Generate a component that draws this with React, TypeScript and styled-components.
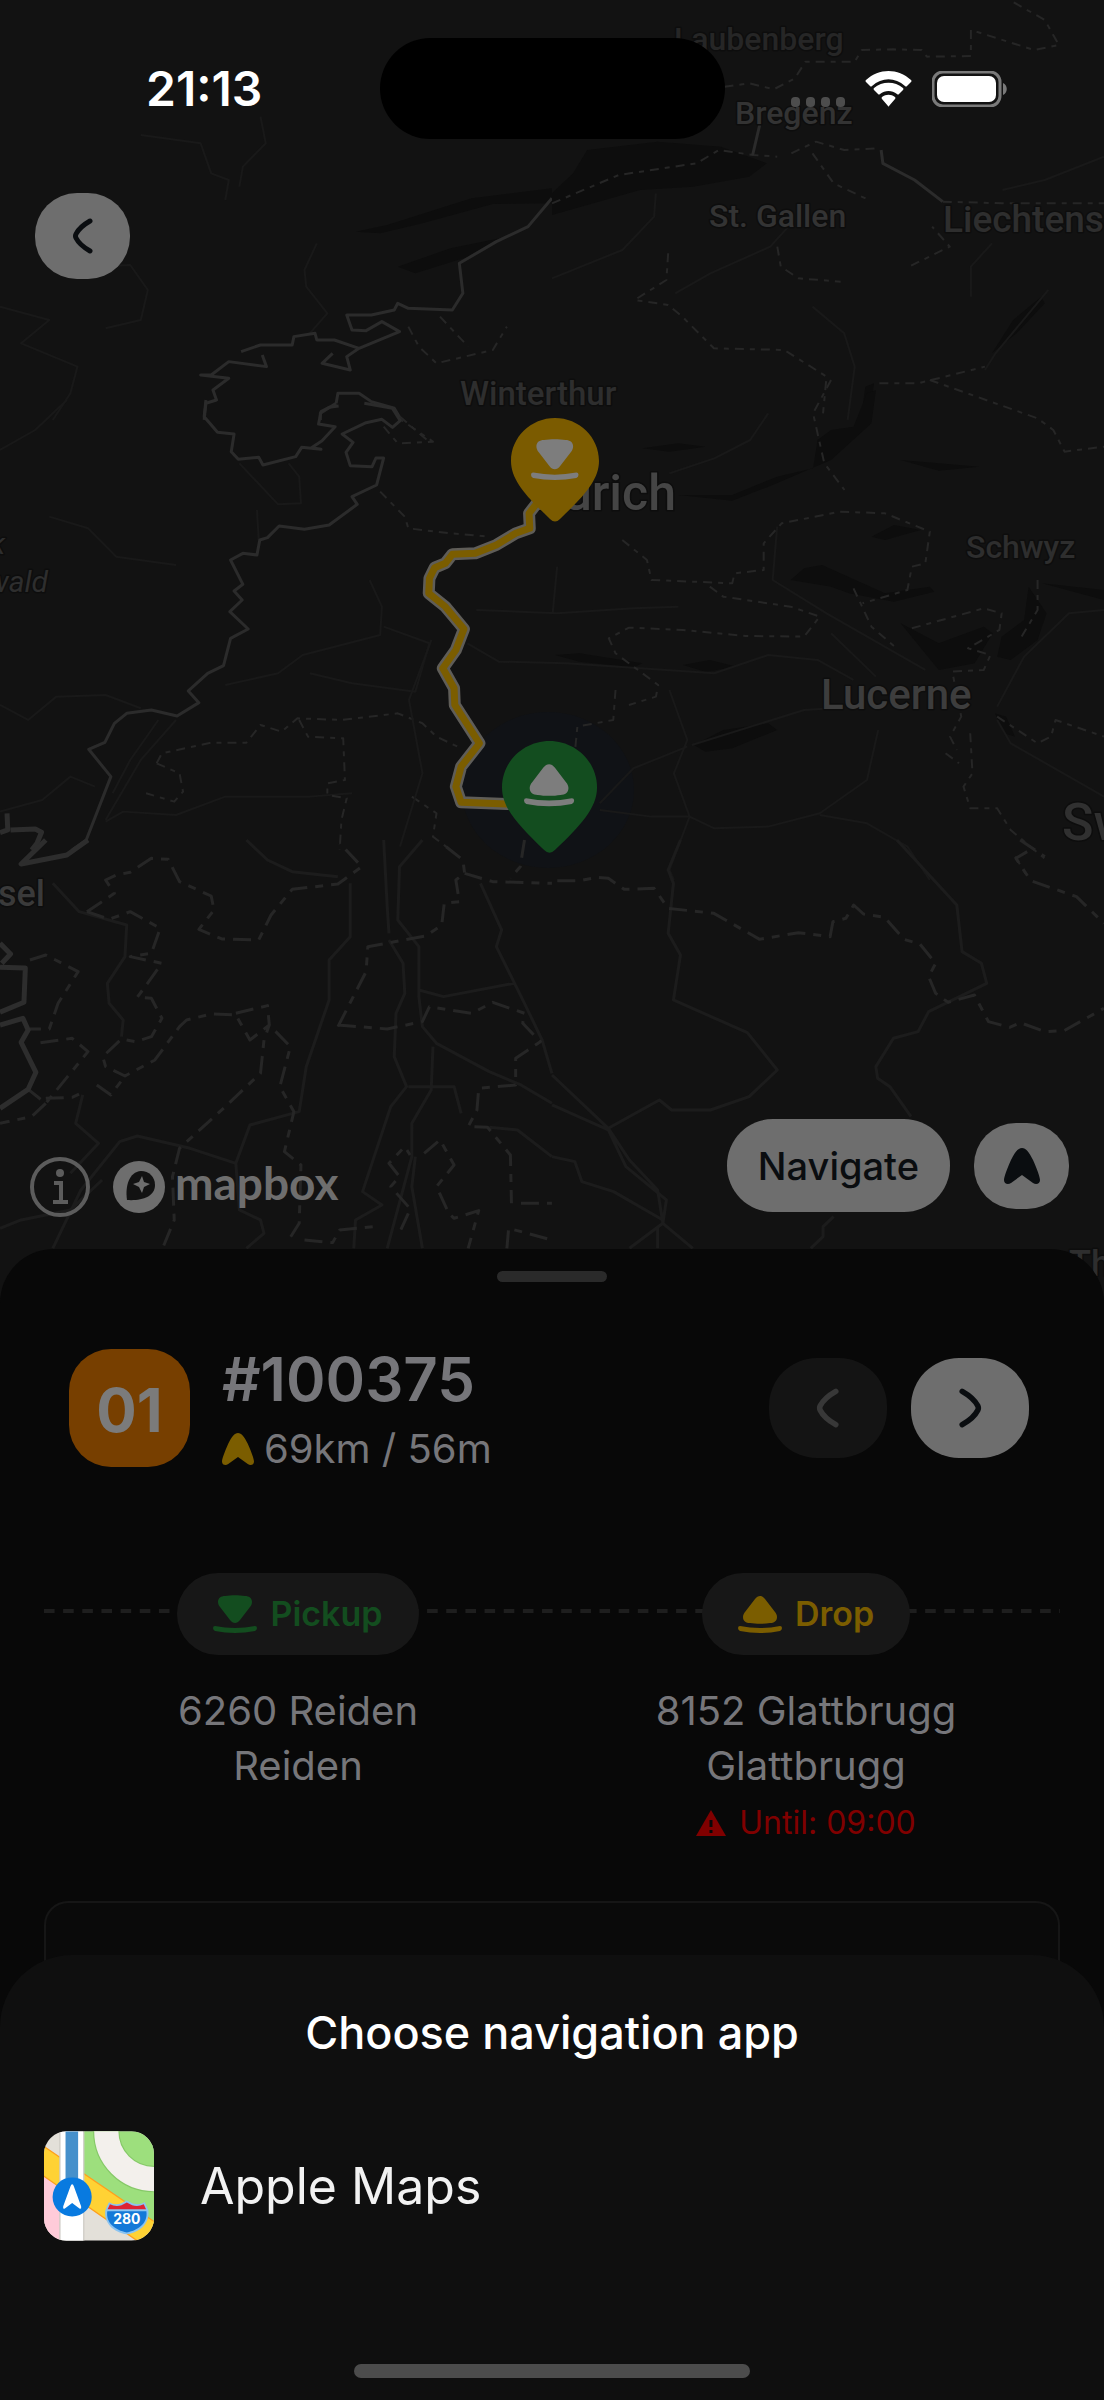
import React from "react";
import styled, { createGlobalStyle } from "styled-components";

const color = {
  map: "#121212",
  panel: "#080808",
  sheet: "#0f0f0f",
  control: "#6e6e6e",
  ink: "#0a0d10",
  amber: "#7b5d00",
  green: "#134d1f",
  muted: "#76767a",
  red: "#800000",
};

const GlobalStyle = createGlobalStyle`
  *, *::before, *::after { box-sizing: border-box; }
  body { margin: 0; background: ${color.map}; font-family: Inter, "Liberation Sans", sans-serif; }
  button { font: inherit; border: 0; padding: 0; cursor: pointer; }
  svg { display: block; }
`;

const Screen = styled.div`
  display: flex;
  flex-direction: column;
  min-height: 100vh;
  overflow: hidden;
`;

/* ---------- Map ---------- */

const MapSection = styled.section`
  position: relative;
  flex: 1;
  display: flex;
  flex-direction: column;
  min-height: 900px;
  padding-bottom: 86px;
  background: ${color.map};
`;

const MapCanvas = styled.svg`
  position: absolute;
  inset: 0;
  width: 100%;
  height: 100%;
  fill: none;
  stroke-linejoin: round;
`;

const Lines = styled.g<{ $tone: string; $width: number; $dash?: string }>`
  stroke: ${(p) => p.$tone};
  stroke-width: ${(p) => p.$width}px;
  stroke-dasharray: ${(p) => p.$dash || "none"};
  path {
    vector-effect: non-scaling-stroke;
  }
`;

const Place = styled.text<{ $size: number; $tone?: string; $italic?: boolean }>`
  font-family: Roboto, "Liberation Sans", sans-serif;
  font-size: ${(p) => p.$size}px;
  font-weight: ${(p) => (p.$italic ? 400 : 500)};
  font-style: ${(p) => (p.$italic ? "italic" : "normal")};
  fill: ${(p) => p.$tone || "#2e2e2e"};
  stroke: #0d0d0d;
  stroke-width: 3px;
  paint-order: stroke;
`;

type Tile = {
  at: string;
  near?: boolean;
  water?: string;
  road?: string;
  admin?: string;
  border?: string;
  coast?: string;
};

const tiles: Tile[] = [
  {
    at: "scale(.352 .3333)",
    water: "M1010 695L1100 675L1340 595L1568 565V610L1400 612L1200 670L1080 700Z M1130 800L1280 745L1420 715L1330 770L1180 820Z",
    road: "M0 920L140 960L60 1030L220 1100L200 1180L150 1260M300 985L400 960L420 870L370 795L260 800M900 730L865 810L870 860L930 940L880 1000M640 600L650 540L600 520L570 430L400 405M740 350L755 430L690 500L680 560",
    admin: "M1160 980L1190 1040L1240 1090L1400 1050L1440 980M1250 950L1330 1040",
    border:
      "M1568 595L1500 680L1410 725L1305 790L1315 880L1285 930L1160 925L1130 910L1120 930L1055 945L985 945L1000 990L1040 992L1085 965L1135 995L1020 1045L950 1020L900 1020L895 1000L835 1010L830 1035L740 1035L685 1055M745 1065L757 1100L650 1085L600 1125L570 1125L650 1135L605 1170L615 1200L585 1210L580 1260M1020 1045L985 1070L995 1110L915 1090L945 1060M955 1210L960 1180L1020 1180L1055 1205L1120 1225L1140 1260M955 1210L910 1240V1260",
  },
  {
    at: "translate(552 0) scale(.352 .3333)",
    water: "M0 580L60 520L100 450L300 425L480 440L610 490L560 530L400 560L250 570L0 645Z M1250 1060L1310 960L1390 890L1400 910L1320 1000Z M880 1240L890 1160L915 1150L900 1260Z",
    road: "M0 835L200 750L290 650L295 580M1568 470L1400 540L1280 570M740 920L830 1000L860 1100L840 1260M1410 870L1260 1060L1230 1110M1250 730L1190 800V890M350 880L450 820L620 740L680 670",
    admin:
      "M0 610L190 525L410 490L475 450L570 465L640 470M490 260L560 250L630 268L690 235L720 185L860 185L880 150L970 148L1050 150L1065 170L1190 168V90L1370 150L1440 135L1400 60L1300 0M330 760L325 840L235 900L330 915L370 950L460 1045L660 1050L780 1130L770 1240M930 1150L1040 1150L1230 1100M640 740L650 800L700 835L820 845M1020 797L1130 740L1080 680M680 460L750 425L830 450L930 445M1110 605L1280 610L1568 610M740 460L800 550L900 600",
    border: "M590 375L570 465M935 450L940 490L1030 540L1110 605",
  },
  {
    at: "translate(0 400) scale(.352 .3333)",
    road: "M500 960L400 1080L300 1260M450 960L370 1080L320 1180M640 855L790 820L860 765L1080 705L1085 620L1050 540M0 915L80 960L160 890L300 885L400 925M0 1235L120 1200L200 1130L270 1160M300 1265L350 1235L500 1245L640 1190L880 1190L1000 1180M730 330L735 420M0 150L100 90L190 0M680 190L790 313L855 310L850 230L820 190M140 350L250 385L330 470L500 495M880 820L1000 850L1180 875L1220 730L1090 680",
    admin:
      "M445 1090L460 1060L600 1028L700 1028L740 975L800 995L845 955L970 960L1130 940L1200 970L1240 1010L1300 1040M850 960L875 1010L975 1015L980 1140L930 1150V1185L985 1195L970 1260L965 1350M445 1090L510 1120L520 1175L495 1205L415 1180M1080 275L1150 350L1160 385L1280 400L1390 410M1170 1190L1240 1240L1230 1310L1280 1350M1090 80L1130 130L1230 125L1140 60",
    border:
      "M585 0L580 50L618 97L665 102L657 155L677 178L735 172L747 195L840 170L857 142L912 148L885 143L915 122L952 80L905 72L912 35L935 22L962 18M1035 10L1115 25L1137 62L1115 82L1085 58L1040 68L972 102L1003 127L983 157L995 197L1057 200L1068 174H1090L1070 255L1000 290L1015 313L935 375L865 388L793 378L760 413L738 420L730 465L690 460L655 480L690 553L665 573L688 600L653 635L705 687L655 715L635 797L590 820L535 873L565 908L503 948L430 930L360 940L325 970L298 1027L252 1048L315 1130L245 1320L205 1350",
    coast: "M20 1240L22 1290L0 1298M30 1290L100 1287L118 1297L105 1330L90 1350",
  },
  {
    at: "translate(400 380) scale(.449 .3333)",
    water:
      "M620 345L740 345L840 290L920 265L930 180L960 150L1010 140L1040 40L1060 30L1050 130L960 240L830 315L740 362Z M870 600L900 565L940 555L1080 640L1180 620L1190 635L1100 665L1000 640L960 620Z M655 1095L720 1050L820 1030L840 1050L740 1105L680 1115Z M345 825L400 820L540 850L520 862L400 845Z M630 855L690 840L750 860L680 875Z M1115 730L1200 790L1300 740L1320 760L1280 850L1200 870Z M1400 620L1440 700L1420 780L1360 840L1330 830L1340 770L1390 720Z M540 205L620 190L680 200L600 215Z M1115 240L1200 250L1290 260L1200 272Z M1050 470L1100 435L1160 450L1080 480Z M1325 1000L1350 1010L1370 1070L1345 1060Z M1430 610L1568 630V660Z",
    road: "M820 100L780 180L700 235L600 280M170 690L350 700L520 685L620 680M150 790L220 845L370 850L700 880L820 825L930 840L1010 900M600 930L640 1080L610 1180L645 1310L600 1470L610 1500M445 1270L520 1165L640 1100M445 1290L560 1310L645 1310L700 1345L820 1340L935 1300L1040 1200L1065 1050M935 1305L1040 1330L1130 1400L1180 1500M350 560L340 700M960 760L1060 890M840 440L830 600L950 700L1170 870M1330 980L1390 830L1490 700L1568 690M650 1095L900 990L960 985M1330 1020L1360 1090L1568 1250M70 780L20 960L50 1180L0 1400",
    admin:
      "M495 480L550 540L560 600L740 610L745 580L810 570V490L850 430L980 395L1080 400L1180 455L1170 550L1140 560L1130 630L1030 670M690 620L720 650L870 680L935 710L900 770L770 768L630 750L510 743L465 775L480 820L540 880L575 915L570 950L510 975M480 930L475 1020L395 1040L390 1110M1010 625L1050 740L1110 810M1140 745L1300 685L1340 700L1335 750L1265 805L1315 825L1300 870L1230 875L1250 1010L1225 1070L1240 1110M1420 600V690L1380 780M1270 1060L1275 1180L1255 1220L1270 1285H1330L1360 1350L1435 1435M1215 1120L1245 1150M1330 1010L1420 1090L1450 1070L1460 1020L1568 1070M1370 1430L1395 1485M960 0L920 100L945 250L990 330M1180 0L1420 115L1455 150L1480 215L1568 200M0 110L60 180",
  },
  {
    at: "translate(0 840) scale(.352 .3333)",
    near: true,
    road: "M995 130V290L935 360V480L870 680L850 815L710 855L670 970L540 925L390 888L340 905L230 1050L150 1225M1090 0L1100 200L1105 280M1200 0L1135 80L1130 240L1190 320V470L1200 560L1240 610L1390 695L1480 735L1568 790M1105 300L1145 370L1150 460L1125 520L1120 650L1155 740L1110 800L1030 1055L1085 1095L1010 1140L1005 1225M1230 620L1225 750L1170 850V950L1100 1225M1365 130L1425 270L1410 320L1490 490L1540 600L1568 700M150 130L225 215L360 255L355 350L305 430L310 490L350 540L345 590M235 765L215 850L280 910L200 1000M670 970L680 1110L740 1140L750 1180L700 1225M0 1165L60 1140L200 1110L290 1020M700 0L760 60L830 95L960 110M1180 950L1170 1040L1200 1225M1390 862L1470 870L1568 950M1160 740H1290L1310 820M1190 450L1260 470L1460 430",
    admin:
      "M247 215L325 160L300 120L330 105L370 97L430 55L478 58L510 125L600 168L608 210L565 268L630 297L735 300L770 225L830 148L960 132L1028 80L965 10M247 215L310 238L370 215L455 265L430 340L370 350L460 370L390 472L430 475L460 535L430 590L385 605L345 597L292 650L300 680L355 708L440 660L510 560L530 540L600 522L670 525L710 600L765 555L825 620L795 740L835 815L808 935L855 975L850 1150L820 1200M670 520L760 497L765 555L750 600L740 700L640 800L510 925L490 1010L495 1140L462 1225M85 360L130 345L222 395L165 490L140 567H85M115 608L205 595L250 635L130 790L80 748M130 775L205 772L240 755M130 790L90 830L0 850M275 735L315 765L355 708M960 560L1040 395L1045 320L1210 288L1255 255L1262 190L1305 185L1295 120L1320 100L1315 60L1255 10M960 555L1100 567L1200 545L1220 500L1340 520L1400 487L1490 520L1485 550L1535 605L1465 655V735L1360 745L1355 810L1330 860L1385 862L1450 945L1453 1090M1320 100L1400 125L1568 130M1490 0L1478 80L1450 115M1205 940L1250 900L1290 975L1240 1040L1275 1120L1290 1135L1360 1112L1330 1225M1160 1100L1110 1040L1135 1010L1105 970L1150 920L1165 945M865 1200L945 1208L965 1170L1080 1158M1160 1120L1130 1190M1440 1225L1445 1165L1568 1200M1480 1090H1568",
    coast: "M130 0L60 72L190 45L250 0M0 310L30 342L5 370M0 382L72 384L68 487L0 517M0 555L65 535L80 570L60 607L102 697L80 748L0 805",
  },
  {
    at: "translate(552 840) scale(.352 .3333)",
    near: true,
    road: "M365 0L330 90L345 130L330 280L365 345L345 480L555 578L640 690L560 770L450 810H340L305 780L160 865M0 705L160 865L220 960L300 1050L315 1150M0 795L160 870L210 980L325 1080L315 1150L220 1225M315 1150L400 1225M300 1160V1225M0 950L65 965L85 1025L175 1055L315 1140M980 0L1150 195L1165 335L1220 370L1235 430L1070 515L1040 575L970 595L920 680L925 715L960 740L1020 830M800 1130L770 1160V1190L735 1225",
    admin:
      "M15 122L80 122L130 112L160 115L205 148L290 145L330 205L460 220L590 298L700 278L790 290L798 245L835 235L857 195L885 222L945 232L1000 298L1045 312L1090 370L1070 410L1090 460L1125 487L1200 465L1240 545L1300 562L1330 548L1400 575L1455 572L1568 505M1330 0L1400 50M1350 35L1318 55L1360 122L1490 170L1568 250",
  },
];

const PickDown = () => (
  <path d="M5 7C5 3 8 1 12 1C18 0 26 0 32 1C36 1 39 3 39 7C39 9 38 11 37 12L27 25C24 29 20 29 17 25L7 12C6 11 5 9 5 7Z" />
);

/* The guitar-pick mark over its tray; it points down for a pickup, up for a drop. */
const StopMark = ({ down }: { down: boolean }) => (
  <>
    {down ? (
      <PickDown />
    ) : (
      <g transform="translate(0 29) scale(1 -1)">
        <PickDown />
      </g>
    )}
    <path d="M2 31Q22 35 42 31Q44 31 44 33Q44 35 42 36Q22 40 2 36Q0 35 0 33Q0 31 2 31Z" />
  </>
);

const pinShape =
  "M44 0C68 0 88 19 88 43C88 62 73 78 49 101Q44 106 39 101C15 78 0 62 0 43C0 19 20 0 44 0Z";

const route =
  "M1525 310L1503 340L1505 385L1465 400L1410 435L1350 460L1285 463L1265 490L1235 503L1220 535L1218 580L1265 620L1318 687L1295 750L1258 805L1290 865L1292 915L1362 1030L1310 1100L1295 1160L1310 1207L1440 1212L1520 1215";

const MapDrawing = () => (
  <MapCanvas viewBox="0 0 1104 1320" preserveAspectRatio="xMidYMin slice" aria-label="Route map">
    <ellipse cx="548" cy="790" rx="86" ry="78" fill="#101216" />
    {tiles.map((t) => (
      <g key={t.at} transform={t.at}>
        {t.water && <path d={t.water} fill="#0d0d0d" />}
        <Lines $tone={t.near ? "#1c1c1c" : "#191919"} $width={t.near ? 3 : 2}>
          <path d={t.road} />
        </Lines>
        {t.admin && (
          <Lines $tone="#262626" $width={t.near ? 3 : 2} $dash={t.near ? "18 8 8 8" : "9 6 5 6"}>
            <path d={t.admin} />
          </Lines>
        )}
        {t.border && (
          <Lines $tone="#2b2b2b" $width={3}>
            <path d={t.border} />
          </Lines>
        )}
        {t.coast && (
          <Lines $tone="#2d2d2d" $width={5}>
            <path d={t.coast} />
          </Lines>
        )}
      </g>
    ))}
    <Place x="674" y="50" $size={32} $tone="#262626">Laubenberg</Place>
    <Place x="735" y="124" $size={32} $tone="#333333">Bregenz</Place>
    <Place x="709" y="227" $size={32} $tone="#333333">St. Gallen</Place>
    <Place x="943" y="232" $size={37}>Liechtens</Place>
    <Place x="460" y="405" $size={33}>Winterthur</Place>
    <Place x="676" y="510" $size={50} $tone="#454545" textAnchor="end">Zürich</Place>
    <Place x="966" y="558" $size={32}>Schwyz</Place>
    <Place x="821" y="709" $size={42} $tone="#3d3d3d">Lucerne</Place>
    <Place x="1062" y="840" $size={52} $tone="#303030">Sw</Place>
    <Place x="45" y="906" $size={36} $tone="#3a3a3a" textAnchor="end">sel</Place>
    <Place x="5" y="554" $size={30} $italic textAnchor="end">k</Place>
    <Place x="48" y="592" $size={30} $italic textAnchor="end">wald</Place>
    <Place x="1069" y="1276" $size={36}>Th</Place>
    <g transform="translate(0 400) scale(.352 .3333)">
      <Lines $tone="#5f5d58" $width={12}>
        <path d={route} />
      </Lines>
      <Lines $tone={color.amber} $width={7}>
        <path d={route} />
      </Lines>
    </g>
    <g transform="translate(511 418)">
      <path d={pinShape} fill="#7b5b00" />
      <g transform="translate(20 21) scale(1.08)" fill="#7d7d7d">
        <StopMark down />
      </g>
    </g>
    <g transform="translate(502 741)">
      <path d={pinShape} transform="scale(1.08)" fill={color.green} />
      <g transform="translate(22 22) scale(1.14)" fill="#7d7d7d">
        <StopMark down={false} />
      </g>
    </g>
  </MapCanvas>
);

/* ---------- Status bar ---------- */

const StatusBar = styled.header`
  position: relative;
  display: grid;
  grid-template-columns: 1fr 345px 1fr;
  align-items: center;
  margin-top: 38px;
`;

const Clock = styled.time`
  padding-left: 146px;
  font-size: 48px;
  line-height: 60px;
  font-weight: 600;
  color: #fff;
`;

const Island = styled.div`
  height: 101px;
  border-radius: 51px;
  background: #000;
`;

const Indicators = styled.div`
  display: flex;
  justify-content: flex-end;
  align-items: flex-end;
  gap: 20px;
  padding-right: 97px;
`;

const StatusIcons = () => (
  <Indicators>
    <svg width="54" height="10" viewBox="0 0 54 10" fill="#4d4d4d" aria-label="No signal">
      <rect width="9" height="10" rx="4" />
      <rect x="15" width="9" height="10" rx="4" />
      <rect x="30" width="9" height="10" rx="4" />
      <rect x="45" width="9" height="10" rx="4" />
    </svg>
    <svg width="47" height="36" viewBox="0 0 47 36" fill="#fff" aria-label="Wi-Fi">
      <path d="M1 11Q0 10 1 9C14 -3 33 -3 46 9Q47 10 46 11L42 15Q41 16 40 15C30 6 17 6 7 15Q6 16 5 15Z" />
      <path d="M9 19Q8 18 9 17C17 10 30 10 38 17Q39 18 38 19L34 23Q33 24 32 23C27 19 20 19 15 23Q14 24 13 23Z" />
      <path d="M17 28Q16 27 17 26C21 23 26 23 30 26Q31 27 30 28L24 35Q23 36 23 35Z" />
    </svg>
    <svg width="75" height="36" viewBox="0 0 75 36" aria-label="Battery full">
      <rect x="1" y="1" width="67" height="34" rx="10" fill="none" stroke="#7a7a7a" strokeWidth="3" />
      <rect x="5" y="5" width="59" height="26" rx="7" fill="#fff" />
      <path d="M71 12C76 14 76 22 71 24Z" fill="#7a7a7a" />
    </svg>
  </Indicators>
);

/* ---------- Controls ---------- */

const RoundButton = styled.button<{ $size?: "small" | "large"; $off?: boolean }>`
  display: grid;
  place-items: center;
  flex: none;
  width: ${(p) => (p.$size === "large" ? 118 : 95)}px;
  height: ${(p) => (p.$size === "large" ? 100 : 86)}px;
  border-radius: ${(p) => (p.$size === "large" ? 48 : 42)}px;
  background: ${(p) => (p.$off ? "#141414" : color.control)};
  color: ${(p) => (p.$off ? "#383838" : color.ink)};
`;

const BackRow = styled.div`
  position: relative;
  display: flex;
  margin-top: 54px;
  padding-left: 35px;
`;

const Chevron = ({ size, right }: { size: number; right?: boolean }) => (
  <svg width={size} height={size} viewBox="0 0 36 36" fill="none" stroke="currentColor" strokeWidth="5" strokeLinecap="round">
    <path
      d="M25 3C18 7 13 12 11 16Q10 18 11 20C13 24 18 29 25 33"
      transform={right ? "matrix(-1 0 0 1 36 0)" : undefined}
    />
  </svg>
);

const NavArrow = ({ size }: { size: number }) => (
  <svg width={size} height={size} viewBox="0 0 36 36" fill="currentColor" aria-hidden="true">
    <path d="M18 0C22 0 25 4 29 12C33 21 36 29 36 32C36 36 32 37 29 35L18 27L7 35C4 37 0 36 0 32C0 29 3 21 7 12C11 4 14 0 18 0Z" />
  </svg>
);

const MapFooter = styled.div`
  position: relative;
  display: flex;
  justify-content: space-between;
  min-height: 98px;
  margin-top: auto;
  padding: 0 35px 0 30px;
`;

const Attribution = styled.div`
  display: flex;
  align-items: center;
  align-self: flex-end;
  height: 60px;
  gap: 23px;
`;

const InfoButton = styled.button`
  background: none;
`;

const MapboxLink = styled.a`
  display: flex;
  align-items: center;
  gap: 10px;
  font-family: Lato, "Liberation Sans", sans-serif;
  font-size: 46px;
  line-height: 52px;
  font-weight: 700;
  color: ${color.control};
  text-decoration: none;
`;

const Wordmark = styled.span`
  padding-bottom: 8px;
`;

const MapActions = styled.div`
  display: flex;
  align-items: center;
  gap: 24px;
  height: 93px;
`;

const NavigateButton = styled.button`
  height: 93px;
  padding: 0 31px;
  border-radius: 46px;
  background: ${color.control};
  color: ${color.ink};
  font-size: 38px;
  line-height: 48px;
  font-weight: 500;
`;

/* ---------- Job panel ---------- */

const Panel = styled.section`
  position: relative;
  margin-top: -54px;
  padding: 22px 44px 0;
  border-radius: 54px 54px 0 0;
  background: ${color.panel};
`;

const Handle = styled.div`
  width: 110px;
  height: 11px;
  margin: 0 auto;
  border-radius: 6px;
  background: #2a2a2a;
`;

const JobHeader = styled.div`
  display: flex;
  align-items: center;
  margin-top: 65px;
  padding: 0 31px 0 25px;
`;

const JobIndex = styled.div`
  display: grid;
  place-items: center;
  flex: none;
  width: 121px;
  height: 118px;
  padding-top: 4px;
  border-radius: 42px;
  background: #773f00;
  color: #7b7b7b;
  font-size: 60px;
  line-height: 64px;
  font-weight: 700;
`;

const JobInfo = styled.div`
  flex: 1;
  margin-left: 32px;
`;

const JobNumber = styled.h1`
  margin: 0;
  font-size: 60px;
  line-height: 64px;
  font-weight: 600;
  color: ${color.muted};
`;

const JobDistance = styled.p`
  display: flex;
  align-items: center;
  gap: 10px;
  margin: 0;
  padding-top: 18px;
  font-size: 40px;
  line-height: 40px;
  color: ${color.muted};

  svg {
    color: ${color.amber};
  }
`;

const Pager = styled.nav`
  display: flex;
  gap: 24px;
`;

const Stops = styled.div`
  display: grid;
  grid-template-columns: 1fr 1fr;
  margin-top: 104px;
  background-image: linear-gradient(90deg, #1e1e1e 11px, transparent 11px);
  background-size: 19px 4px;
  background-repeat: round no-repeat;
  background-position: 0 36px;
`;

const Stop = styled.article`
  display: flex;
  flex-direction: column;
  align-items: center;
`;

const StopChip = styled.h2<{ $tone: string }>`
  display: flex;
  align-items: center;
  gap: 13px;
  height: 82px;
  margin: 0 0 28px;
  padding: 0 36px;
  border-radius: 41px;
  background: #171717;
  color: ${(p) => p.$tone};
  font-size: 34px;
  line-height: 40px;
  font-weight: 600;
`;

const Address = styled.address`
  font-size: 40px;
  line-height: 55px;
  font-style: normal;
  text-align: center;
  color: ${color.muted};
`;

const Deadline = styled.p`
  display: flex;
  align-items: center;
  gap: 13px;
  margin: 0;
  padding-top: 10px;
  font-size: 32px;
  line-height: 40px;
  color: ${color.red};
`;

const DetailCard = styled.div`
  height: 126px;
  margin-top: 58px;
  border: 2px solid #161616;
  border-bottom: 0;
  border-radius: 24px 24px 0 0;
  background: #0a0a0a;
`;

type StopData = { kind: string; tone: string; down: boolean; lines: string[]; until?: string };

const stops: StopData[] = [
  { kind: "Pickup", tone: color.green, down: true, lines: ["6260 Reiden", "Reiden"] },
  { kind: "Drop", tone: color.amber, down: false, lines: ["8152 Glattbrugg", "Glattbrugg"], until: "09:00" },
];

/* ---------- Bottom sheet ---------- */

const Sheet = styled.section`
  position: relative;
  display: flex;
  flex-direction: column;
  margin-top: -72px;
  padding: 52px 44px 22px;
  border-radius: 72px 72px 0 0;
  background: ${color.sheet};
  color: #fff;
`;

const SheetTitle = styled.h2`
  margin: 0;
  font-size: 45px;
  line-height: 52px;
  font-weight: 500;
  text-align: center;
`;

const AppOption = styled.button`
  display: flex;
  align-items: center;
  gap: 46px;
  margin-top: 72px;
  background: none;
  color: #f2f2f2;
  font-size: 50px;
  line-height: 60px;
  text-align: left;
`;

const HomeIndicator = styled.div`
  width: 396px;
  height: 14px;
  margin: 123px auto 0;
  border-radius: 7px;
  background: #4c4c4c;
`;

const AppleMapsIcon = () => (
  <svg width="110" height="110" viewBox="40 62 332 330" aria-hidden="true">
    <clipPath id="app-tile">
      <rect x="40" y="62" width="332" height="330" rx="68" />
    </clipPath>
    <g clipPath="url(#app-tile)">
      <rect x="40" y="62" width="332" height="330" fill="#e3e0d9" />
      <path d="M160 62H372V340L160 190Z" fill="#9ddf7d" />
      <circle cx="372" cy="62" r="144" fill="none" stroke="#86c968" strokeWidth="80" />
      <circle cx="372" cy="62" r="144" fill="none" stroke="#f3f0ec" strokeWidth="73" />
      <path d="M40 198L90 234V392H40Z" fill="#ffcbd9" />
      <path d="M36 105L376 337V430L36 195Z" fill="#ffd234" stroke="#ff9f1c" strokeWidth="4" />
      <rect x="86" y="62" width="76" height="330" fill="#cfccc6" />
      <rect x="90" y="62" width="68" height="330" fill="#fff" />
      <rect x="105" y="62" width="38" height="198" fill="#4690cb" />
      <circle cx="125" cy="260" r="59" fill="#087ae0" />
      <path d="M125 222Q128 222 130 228L152 288Q154 299 146 294L125 278L104 294Q96 299 98 288L120 228Q122 222 125 222Z" fill="#fff" />
      <path d="M236 276Q252 286 272 280L290 271L308 280Q328 286 344 276L355 300C360 340 330 366 290 373C250 366 220 340 225 300Z" fill="#8cc4f0" />
      <path d="M231 303H349C354 338 326 360 290 367C254 360 226 338 231 303Z" fill="#1479d8" />
      <path d="M239 282Q256 291 274 285L290 277L306 285Q324 291 341 282L348 297H232Z" fill="#dd2334" />
      <text x="290" y="341" textAnchor="middle" fill="#fff" fontFamily="Inter, sans-serif" fontWeight="700" fontSize="42">
        280
      </text>
    </g>
  </svg>
);

export default function App() {
  return (
    <Screen>
      <GlobalStyle />
      <MapSection>
        <MapDrawing />
        <StatusBar>
          <Clock>21:13</Clock>
          <Island />
          <StatusIcons />
        </StatusBar>
        <BackRow>
          <RoundButton aria-label="Back">
            <Chevron size={36} />
          </RoundButton>
        </BackRow>
        <MapFooter>
          <Attribution>
            <InfoButton aria-label="Map information">
              <svg width="60" height="60" viewBox="0 0 60 60" fill="none" stroke="#5c5c5c" strokeWidth="4">
                <circle cx="30" cy="30" r="28" />
                <path d="M24 26H31V45M23 45H38" />
                <circle cx="30" cy="16" r="4" fill="#5c5c5c" stroke="none" />
              </svg>
            </InfoButton>
            <MapboxLink href="#mapbox">
              <svg width="52" height="52" viewBox="0 0 52 52" fill="currentColor" aria-hidden="true">
                <circle cx="26" cy="26" r="26" />
                <path d="M14 39C12 25 16 11 28 10C36 10 42 16 42 24C42 36 28 40 14 39Z" fill={color.map} />
                <path d="M29 15L31 21L37 23L31 26L29 32L26 26L20 23L26 21Z" />
              </svg>
              <Wordmark>mapbox</Wordmark>
            </MapboxLink>
          </Attribution>
          <MapActions>
            <NavigateButton>Navigate</NavigateButton>
            <RoundButton aria-label="Center on route">
              <NavArrow size={36} />
            </RoundButton>
          </MapActions>
        </MapFooter>
      </MapSection>

      <Panel>
        <Handle />
        <JobHeader>
          <JobIndex>01</JobIndex>
          <JobInfo>
            <JobNumber>#100375</JobNumber>
            <JobDistance>
              <NavArrow size={32} />
              69km / 56m
            </JobDistance>
          </JobInfo>
          <Pager aria-label="Jobs">
            <RoundButton $size="large" $off disabled aria-label="Previous job">
              <Chevron size={40} />
            </RoundButton>
            <RoundButton $size="large" aria-label="Next job">
              <Chevron size={40} right />
            </RoundButton>
          </Pager>
        </JobHeader>
        <Stops>
          {stops.map((s) => (
            <Stop key={s.kind}>
              <StopChip $tone={s.tone}>
                <svg width="44" height="39" viewBox="0 0 44 39" fill="currentColor" aria-hidden="true">
                  <StopMark down={s.down} />
                </svg>
                {s.kind}
              </StopChip>
              <Address>
                {s.lines.map((line) => (
                  <div key={line}>{line}</div>
                ))}
              </Address>
              {s.until && (
                <Deadline>
                  <svg width="30" height="26" viewBox="0 0 30 26" aria-hidden="true">
                    <path d="M15 0L30 26H0Z" fill="currentColor" />
                    <path d="M15 10V17M15 20V23" stroke={color.panel} strokeWidth="3" />
                  </svg>
                  Until: {s.until}
                </Deadline>
              )}
            </Stop>
          ))}
        </Stops>
        <DetailCard />
      </Panel>

      <Sheet aria-labelledby="sheet-title">
        <SheetTitle id="sheet-title">Choose navigation app</SheetTitle>
        <AppOption>
          <AppleMapsIcon />
          Apple Maps
        </AppOption>
        <HomeIndicator />
      </Sheet>
    </Screen>
  );
}
